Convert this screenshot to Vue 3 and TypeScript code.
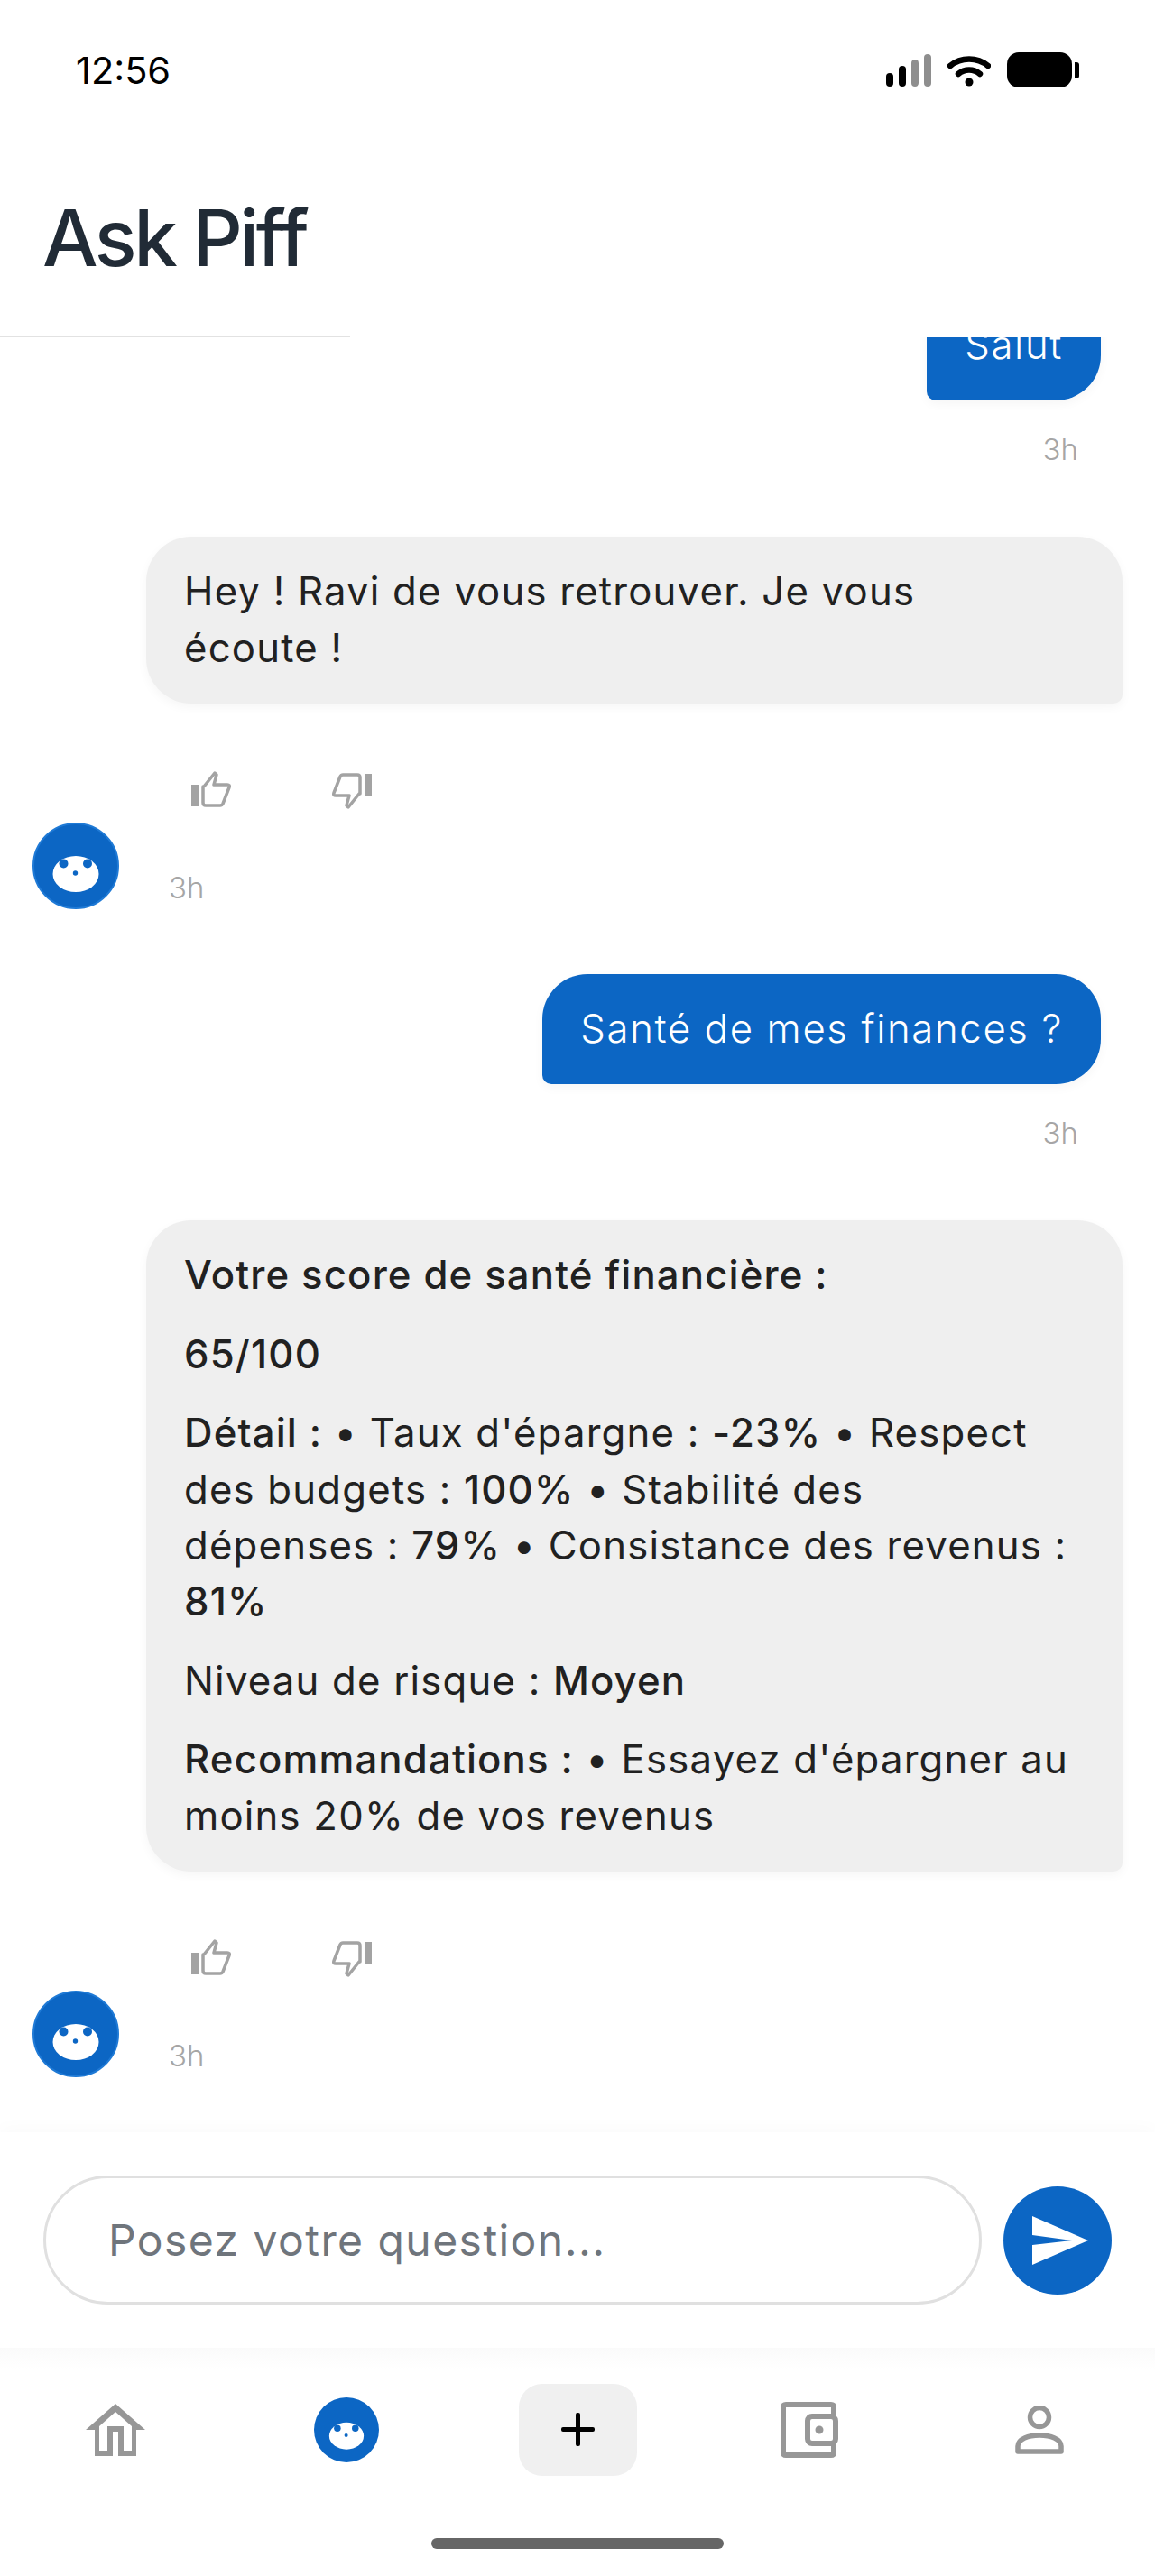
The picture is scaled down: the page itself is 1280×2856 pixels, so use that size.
<template>
  <div class="screen">
    <div class="status-bar">
      <span class="time">12:56</span>
      <div class="status-icons">
        <div class="signal">
          <span class="bar b1"></span>
          <span class="bar b2"></span>
          <span class="bar b3 dim"></span>
          <span class="bar b4 dim"></span>
        </div>
        <svg class="wifi" width="48" height="36" viewBox="0 0 48 36">
          <path d="M3 13C15 3 33 3 45 13" fill="none" stroke="#000" stroke-width="6.5" stroke-linecap="round" />
          <path d="M12 22C19 16 29 16 36 22" fill="none" stroke="#000" stroke-width="6.5" stroke-linecap="round" />
          <circle cx="24" cy="31" r="4.5" fill="#000" />
        </svg>
        <div class="battery"><span class="nub"></span></div>
      </div>
    </div>

    <header class="header">
      <h1>Ask Piff</h1>
    </header>

    <main class="messages">
      <template v-for="(m, i) in messages" :key="i">
        <div v-if="m.role === 'user'" class="user-row">
          <div class="bubble user">{{ m.text }}</div>
          <span class="stamp">3h</span>
        </div>
        <div v-else class="bot-row">
          <div class="bubble bot">
            <p v-for="(line, j) in m.lines" :key="j" v-html="line"></p>
          </div>
          <div class="bot-meta">
            <div class="avatar">
              <svg viewBox="0 0 96 96" width="96" height="96">
                <circle cx="48" cy="48" r="47" fill="#0c66c4" stroke="#1f7ad6" stroke-width="2" />
                <ellipse cx="48" cy="57" rx="25.5" ry="20" fill="#fff" />
                <circle cx="34.500" cy="45.500" r="5" fill="#0c66c4" />
                <circle cx="61" cy="45.500" r="5" fill="#0c66c4" />
                <circle cx="47.500" cy="56" r="2.700" fill="#0c66c4" />
              </svg>
            </div>
            <div class="meta-col">
              <div class="votes">
                <svg width="44" height="42" viewBox="0 0 44 42">
                  <rect x="0" y="16" width="8" height="24" fill="#a3a3a3" />
                  <path d="M14 18L26 3L28 5L25 16H40Q43 16 42 19L35 37Q34 39 32 39H16Q13 39 13 36V18Z" fill="none" stroke="#a3a3a3" stroke-width="3.500" stroke-linejoin="round" />
                </svg>
                <svg class="down" width="44" height="42" viewBox="0 0 44 42">
                  <rect x="36" y="2" width="8" height="24" fill="#a3a3a3" />
                  <path d="M30 24L18 39L16 37L19 26H4Q1 26 2 23L9 5Q10 3 12 3H28Q31 3 31 6V24Z" fill="none" stroke="#a3a3a3" stroke-width="3.500" stroke-linejoin="round" />
                </svg>
              </div>
              <span class="stamp">3h</span>
            </div>
          </div>
        </div>
      </template>
    </main>

    <section class="composer">
      <div class="field">Posez votre question...</div>
      <button class="send">
        <svg width="62" height="54" viewBox="0 0 62 54">
          <path d="M0 0L62 27L0 54V32L44 27L0 21Z" fill="#fff" />
        </svg>
      </button>
    </section>

    <nav class="tabs">
      <div class="tab">
        <svg width="66" height="58" viewBox="0 0 66 58">
          <path d="M33 0L66 29H56V58H36V31H30V58H10V29H0Z M33 9L15 25V52H24V25H42V52H51V25Z" fill="#979797" fill-rule="evenodd" />
        </svg>
      </div>
      <div class="tab">
        <svg viewBox="0 0 96 96" width="72" height="72">
          <circle cx="48" cy="48" r="48" fill="#0c66c4" />
          <ellipse cx="48" cy="57" rx="25.500" ry="20" fill="#fff" />
          <circle cx="34.500" cy="45.500" r="5" fill="#0c66c4" />
          <circle cx="61" cy="45.500" r="5" fill="#0c66c4" />
          <circle cx="47.500" cy="56" r="2.700" fill="#0c66c4" />
        </svg>
      </div>
      <div class="tab">
        <div class="plus"><span class="h"></span><span class="v"></span></div>
      </div>
      <div class="tab">
        <svg class="wallet" width="64" height="62" viewBox="0 0 64 62">
          <path d="M59 15V6Q59 3 56 3H6Q3 3 3 6V56Q3 59 6 59H56Q59 59 59 56V47" fill="none" stroke="#979797" stroke-width="6" />
          <rect x="30" y="16" width="31" height="30" rx="5" fill="#fff" stroke="#979797" stroke-width="6" />
          <circle cx="43" cy="31" r="4.500" fill="#979797" />
        </svg>
      </div>
      <div class="tab">
        <svg width="54" height="54" viewBox="0 0 54 54">
          <circle cx="27" cy="13" r="10.500" fill="none" stroke="#979797" stroke-width="5.500" />
          <path d="M3 51V45C3 37 15 33 27 33S51 37 51 45V51Z" fill="none" stroke="#979797" stroke-width="5.500" stroke-linejoin="round" />
        </svg>
      </div>
    </nav>

    <div class="home-bar"><span></span></div>
  </div>
</template>

<script setup lang="ts">
type Message =
  | { role: 'user'; text: string }
  | { role: 'bot'; lines: string[] }

// \u00a0 keeps French " !" and " :" attached to the word before them
const messages: Message[] = [
  { role: 'user', text: 'Salut' },
  { role: 'bot', lines: ['Hey\u00a0! Ravi de vous retrouver. Je vous écoute\u00a0!'] },
  { role: 'user', text: 'Santé de mes finances\u00a0?' },
  {
    role: 'bot',
    lines: [
      '<strong>Votre score de santé financière\u00a0:</strong>',
      '<strong>65/100</strong>',
      "<strong>Détail\u00a0:</strong> • Taux d'épargne\u00a0: <strong>-23%</strong> • Respect des budgets\u00a0: <strong>100%</strong> • Stabilité des dépenses\u00a0: <strong>79%</strong> • Consistance des revenus\u00a0: <strong>81%</strong>",
      'Niveau de risque\u00a0: <strong>Moyen</strong>',
      "<strong>Recommandations\u00a0:</strong> • Essayez d'épargner au moins 20% de vos revenus",
    ],
  },
]
</script>

<style>
html, body { margin: 0; background: #fff; }
</style>

<style scoped>
.screen {
  width: 1280px;
  height: 2856px;
  display: flex;
  flex-direction: column;
  background: #fff;
  font-family: Inter, "Noto Sans", sans-serif;
  overflow: hidden;
}
.status-bar {
  height: 152px;
  flex: none;
  display: flex;
  justify-content: space-between;
  align-items: flex-start;
  padding: 58px 84px 0;
  box-sizing: border-box;
}
.time {
  font-size: 41.5px;
  line-height: 40px;
  font-weight: 400;
  color: #000;
}
.status-icons {
  display: flex;
  align-items: center;
  gap: 18px;
}
.signal { display: flex; align-items: flex-end; gap: 6px; height: 36px; }
.bar { width: 8px; border-radius: 4px; background: #000; }
.b1 { height: 15px; }
.b2 { height: 23px; }
.b3 { height: 30px; }
.b4 { height: 36px; }
.dim { background: #8e8e8e; }
.battery {
  position: relative;
  width: 72px;
  height: 39px;
  border-radius: 13px;
  background: #000;
  margin-right: 8px;
}
.nub {
  position: absolute;
  left: 75px;
  top: 11px;
  width: 5px;
  height: 18px;
  border-radius: 0 3px 3px 0;
  background: #000;
}
.header {
  width: 388px;
  height: 222px;
  flex: none;
  box-sizing: border-box;
  border-bottom: 2px solid #e2e2e2;
  padding: 57px 0 0 47px;
}
.header h1 {
  margin: 0;
  font-size: 87px;
  line-height: 110px;
  font-weight: 500;
  letter-spacing: -3.5px;
  color: #212b36;
}
.messages {
  flex: 1;
  min-height: 0;
  overflow: hidden;
  display: flex;
  flex-direction: column;
  justify-content: flex-end;
  padding: 0 36px;
}
.user-row {
  display: flex;
  flex-direction: column;
  align-items: flex-end;
  margin-bottom: 78px;
  flex: none;
}
.bot-row { margin-bottom: 72px; flex: none; }
.bot-row:last-child { margin-bottom: 61px; }
.bubble {
  font-size: 43.680px;
  line-height: 62.400px;
  letter-spacing: 1.2px;
  box-sizing: border-box;
}
.user {
  margin-right: 24px;
  padding: 30px 42px;
  background: #0c66c4;
  color: #fff;
  font-weight: 350;
  letter-spacing: 1.65px;
  border-radius: 50px 50px 50px 10px;
  box-shadow: 0 4px 12px rgba(0, 0, 0, 0.04);
}
.bot {
  margin-left: 126px;
  padding: 30px 56px 30px 42px;
  background: #efefef;
  color: #212121;
  font-weight: 400;
  border-radius: 50px 50px 10px 50px;
  box-shadow: 0 4px 12px rgba(0, 0, 0, 0.04);
}
.bot p { margin: 0 0 25px; }
.bot p:last-child { margin-bottom: 0; }
.bot :deep(strong) { font-weight: 500; letter-spacing: 1.15px; }
.stamp {
  font-size: 33px;
  line-height: 38px;
  color: #a6a6a6;
  font-weight: 350;
}
.user-row .stamp { margin-top: 35px; margin-right: 49px; }
.bot-meta {
  display: flex;
  align-items: flex-end;
  margin-top: 74px;
}
.avatar { width: 96px; height: 96px; flex: none; }
.meta-col { margin-left: 55px; padding-bottom: 5px; }
.votes { display: flex; align-items: flex-start; gap: 112px; margin-left: 25px; height: 42px; margin-bottom: 69px; }
.votes .down { margin-top: 2px; }
.meta-col .stamp { display: block; }
.composer {
  flex: none;
  height: 239px;
  display: flex;
  align-items: flex-start;
  box-sizing: border-box;
  padding: 48px 48px 0;
  gap: 24px;
  box-shadow: 0 -4px 20px rgba(0, 0, 0, 0.025);
}
.field {
  width: 1040px;
  height: 143px;
  box-sizing: border-box;
  border: 3px solid #e0e0e0;
  border-radius: 72px;
  padding-left: 69px;
  font-size: 48px;
  font-weight: 400;
  letter-spacing: 1.45px;
  line-height: 137px;
  color: #6f757c;
  flex: none;
}
.send {
  width: 120px;
  height: 120px;
  margin-top: 12px;
  padding: 0 0 0 6px;
  border: none;
  border-radius: 50%;
  background: #0c66c4;
  display: flex;
  align-items: center;
  justify-content: center;
}
.tabs {
  flex: none;
  display: grid;
  grid-template-columns: repeat(5, 256px);
  height: 176px;
  padding-top: 40px;
  box-sizing: border-box;
  background: linear-gradient(#fafafa, #fff 24px);
}
.tab { display: flex; align-items: center; justify-content: center; height: 102px; }
.wallet { margin-left: 2px; }
.plus {
  position: relative;
  width: 131px;
  height: 102px;
  border-radius: 26px;
  background: #f0f0f0;
}
.plus .h, .plus .v { position: absolute; background: #000; border-radius: 2px; }
.plus .h { left: 47px; top: 48px; width: 37px; height: 5px; }
.plus .v { left: 63px; top: 32px; width: 5px; height: 37px; }
.home-bar { flex: none; height: 77px; display: flex; justify-content: center; align-items: flex-start; padding-top: 35px; box-sizing: border-box; }
.home-bar span { width: 324px; height: 12px; border-radius: 6px; background: #666; }
</style>
